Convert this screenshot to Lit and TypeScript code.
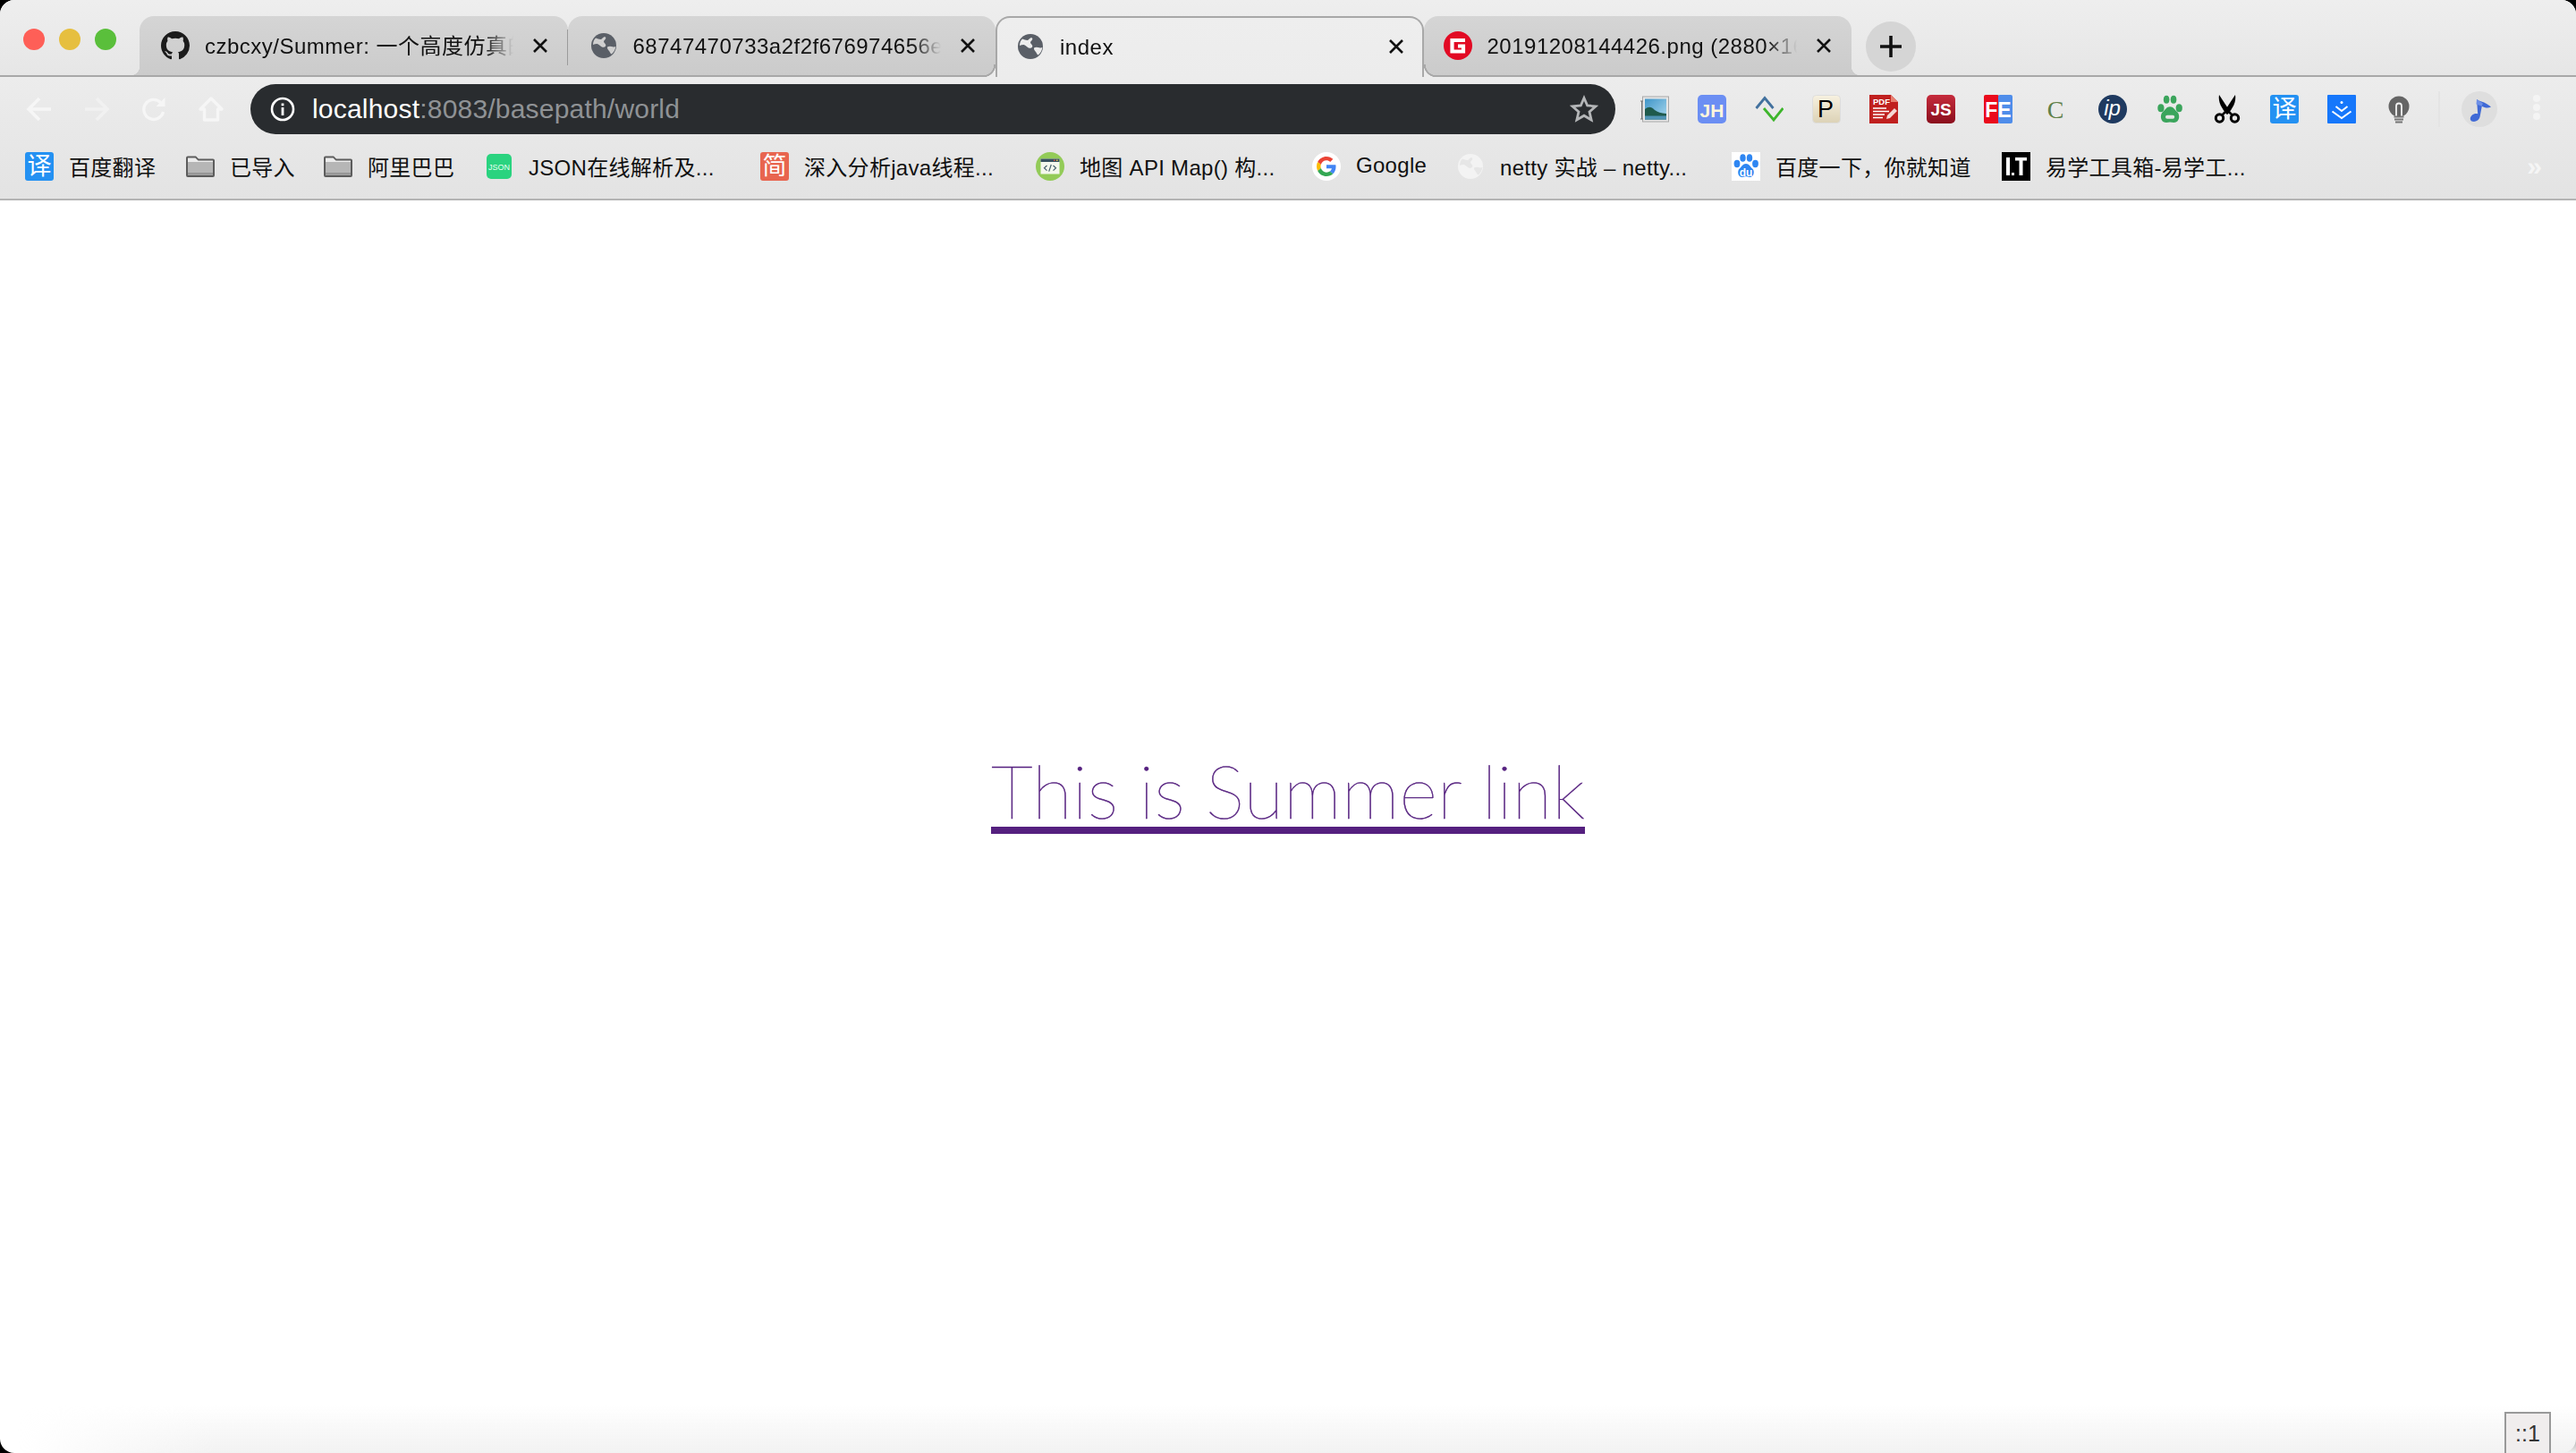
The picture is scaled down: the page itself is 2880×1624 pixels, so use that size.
import { LitElement, css, html, svg } from 'lit';
import { customElement } from 'lit/decorators.js';

const octocat = svg`<svg viewBox="0 0 16 16" class="ic"><path fill="#1b1b1b" d="M8 0C3.58 0 0 3.58 0 8c0 3.54 2.29 6.53 5.47 7.59.4.07.55-.17.55-.38 0-.19-.01-.82-.01-1.49-2.01.37-2.53-.49-2.69-.94-.09-.23-.48-.94-.82-1.13-.28-.15-.68-.52-.01-.53.63-.01 1.08.58 1.23.82.72 1.21 1.87.87 2.33.66.07-.52.28-.87.51-1.07-1.78-.2-3.64-.89-3.64-3.95 0-.87.31-1.59.82-2.15-.08-.2-.36-1.02.08-2.12 0 0 .67-.21 2.2.82.64-.18 1.32-.27 2-.27.68 0 1.36.09 2 .27 1.53-1.04 2.2-.82 2.2-.82.44 1.1.16 1.92.08 2.12.51.56.82 1.27.82 2.15 0 3.07-1.87 3.75-3.65 3.95.29.25.54.73.54 1.48 0 1.07-.01 1.93-.01 2.2 0 .21.15.46.55.38A8.013 8.013 0 0016 8c0-4.42-3.58-8-8-8z"/></svg>`;

const globe = (fg: string, bg: string) => svg`<svg viewBox="0 0 32 32" class="ic">
  <circle cx="16" cy="16" r="14" fill=${fg}/>
  <path fill=${bg} d="M7 7.500c2 .4 4 1.600 5.500 1.500 1.400-.2 2-1.800 3.500-2.600 1.500-.6 2.500.1 2.300 1.300-.3 1.500-2.300 2.300-2.300 3.800 0 1.700 2.500 2.300 2.300 4.300-.2 1.800-2.500 2.400-3.800 1.900-2-.8-3.300-3-5.300-3.500-1.800-.4-3.500.5-5.200.8C4 12 5 9 7 7.500z"/>
  <path fill=${bg} d="M20 17.500c1.800-1 4-.8 6-.2 1.200.4 2.500.2 3.300-.2-.3 3.500-2 6.500-4.600 8.500-1.300-.6-1.500-2-2.300-3.200-.8-1.300-3-2.800-2.400-4.900z"/>
</svg>`;

const close = svg`<svg viewBox="0 0 18 18" class="close"><path d="M2 2l14 14M16 2L2 16" stroke="#111" stroke-width="2.600" fill="none"/></svg>`;

const folder = svg`<svg viewBox="0 0 32 32" class="ic">
  <path fill="#5c5c5c" d="M0 6.500A2 2 0 0 1 2 4.500h9l3 3h16a2 2 0 0 1 2 2V26a2 2 0 0 1-2 2H2a2 2 0 0 1-2-2z"/>
  <path fill="#ececec" d="M2 6.500h8.500l3 3H30v1.500H2z"/>
  <rect x="2" y="11" width="28" height="12.500" fill="#b6b6b6"/>
  <rect x="2" y="23.500" width="28" height="2.500" fill="#9c9c9c"/>
</svg>`;

const tile = (bg: string, label: string, cls = 'tile-zh', rx = 3) => svg`<svg viewBox="0 0 32 32" class="ic">
  <rect width="32" height="32" rx=${rx} fill=${bg}/>
  <text x="16" y="25" text-anchor="middle" class=${cls}>${label}</text>
</svg>`;

const jsonIcon = svg`<svg viewBox="0 0 32 32" class="ic">
  <rect x="2" y="2" width="28" height="28" rx="5" fill="#2ad37f"/>
  <text x="16" y="20" text-anchor="middle" class="tile-json">JSON</text>
</svg>`;

const mapIcon = svg`<svg viewBox="0 0 32 32" class="ic">
  <circle cx="16" cy="16" r="16" fill="#93cb58"/>
  <rect x="5.500" y="7.500" width="21" height="17" fill="#f4f7ee"/>
  <rect x="5.500" y="7.500" width="21" height="3.500" fill="#37505f"/>
  <rect x="20" y="8.500" width="1.500" height="1.500" fill="#e0574a"/>
  <rect x="23" y="8.500" width="1.500" height="1.500" fill="#e7c34a"/>
  <path d="M12.500 15l-3 2.800 3 2.800M19.500 15l3 2.800-3 2.800M17.300 14l-2.600 7.600" stroke="#47606e" stroke-width="1.200" fill="none"/>
</svg>`;

const googleIcon = svg`<svg viewBox="0 0 32 32" class="ic">
  <circle cx="16" cy="16" r="16" fill="#fff"/>
  <g transform="translate(5 5) scale(.458)">
    <path fill="#EA4335" d="M24 9.500c3.540 0 6.710 1.220 9.210 3.600l6.850-6.850C35.900 2.380 30.470 0 24 0 14.620 0 6.510 5.380 2.560 13.220l7.980 6.190C12.430 13.720 17.740 9.500 24 9.500z"/>
    <path fill="#4285F4" d="M46.980 24.550c0-1.570-.15-3.090-.38-4.550H24v9.020h12.940c-.58 2.960-2.260 5.480-4.780 7.180l7.730 6c4.510-4.180 7.090-10.360 7.090-17.650z"/>
    <path fill="#FBBC05" d="M10.530 28.590c-.48-1.450-.76-2.990-.76-4.590s.27-3.140.76-4.590l-7.980-6.190C.92 16.460 0 20.120 0 24c0 3.880.92 7.540 2.560 10.780l7.970-6.190z"/>
    <path fill="#34A853" d="M24 48c6.480 0 11.930-2.130 15.890-5.810l-7.730-6c-2.150 1.450-4.920 2.300-8.160 2.300-6.260 0-11.570-4.220-13.470-9.910l-7.980 6.190C6.510 42.620 14.620 48 24 48z"/>
  </g>
</svg>`;

const baiduIcon = svg`<svg viewBox="0 0 32 32" class="ic">
  <rect width="32" height="32" fill="#fff"/>
  <g fill="#2e86f2">
    <ellipse cx="6" cy="13" rx="3.400" ry="4.200"/>
    <ellipse cx="12.500" cy="6.500" rx="3.200" ry="4.300"/>
    <ellipse cx="20" cy="6.500" rx="3.200" ry="4.300"/>
    <ellipse cx="26.500" cy="13" rx="3.400" ry="4.200"/>
    <path d="M16 13c3.500 0 5 3.500 7.500 5.800 2.400 2.300 1.500 9.700-3.500 9.200-1.500-.2-2.800-.8-4-.8s-2.500.6-4 .8c-5 .5-5.900-6.900-3.500-9.200C11 16.500 12.500 13 16 13z"/>
  </g>
  <text x="16" y="27" text-anchor="middle" class="tile-du">du</text>
</svg>`;

const itIcon = svg`<svg viewBox="0 0 32 32" class="ic">
  <rect width="32" height="32" fill="#000"/>
  <rect x="5" y="6" width="4" height="20" fill="#fff"/>
  <rect x="11" y="23" width="3" height="3" fill="#fff"/>
  <rect x="15" y="6" width="13" height="3.500" fill="#fff"/>
  <rect x="19.500" y="6" width="4" height="20" fill="#fff"/>
</svg>`;

const redG = svg`<svg viewBox="0 0 32 32" class="ic">
  <circle cx="16" cy="16" r="16" fill="#e20a24"/>
  <path d="M24 10H9.500v12.500H22V16.500h-6" fill="none" stroke="#fff" stroke-width="4.200"/>
</svg>`;

const imageExt = svg`<svg viewBox="0 0 32 32" class="ic">
  <defs><linearGradient id="sky" x1="0" y1="0" x2="1" y2="1"><stop offset="0" stop-color="#3f95c8"/><stop offset="1" stop-color="#a9d8ee"/></linearGradient></defs>
  <rect x="2.500" y="2" width="29" height="28" fill="#e6e6e6" stroke="#a8a8a8"/>
  <rect x="5" y="4.500" width="24" height="23" fill="url(#sky)"/>
  <path d="M5 16c4-3 7-3 11 1 3 2.500 7 3.500 13 4v6.500H5z" fill="#1f5a4c"/>
  <path d="M5 23.500h24v4H5z" fill="#4f93b4"/>
  <path d="M0 7h3M0 27h3M1.500 7v20" stroke="#777" stroke-width="1"/>
</svg>`;

const chevrons = svg`<svg viewBox="0 0 32 32" class="ic">
  <path d="M1.500 15L11 3.500 20.500 15" fill="none" stroke="#42719e" stroke-width="2.800"/>
  <path d="M10 15l11 13 10.500-13" fill="none" stroke="#3db52b" stroke-width="2.800"/>
</svg>`;

const pTile = svg`<svg viewBox="0 0 32 32" class="ic">
  <defs><linearGradient id="cream" x1="0" y1="0" x2="0" y2="1"><stop offset="0" stop-color="#f7f1e0"/><stop offset="1" stop-color="#dcd2b6"/></linearGradient></defs>
  <rect x=".5" y=".5" width="31" height="31" rx="4" fill="url(#cream)" stroke="#ddd"/>
  <text x="15" y="25" text-anchor="middle" class="tile-p">P</text>
</svg>`;

const pdfIcon = svg`<svg viewBox="0 0 32 32" class="ic">
  <path d="M0 0h24l8 8v24H0z" fill="#c0201f"/>
  <path d="M24 0l8 8h-8z" fill="#e77f70"/>
  <text x="4" y="11" class="tile-pdf">PDF</text>
  <path d="M4 15h15M4 18.500h18M4 22h13M4 25.500h11" stroke="#fff" stroke-width="1.700"/>
  <path d="M19 27l1-4 8-8 3 3-8 8z" fill="#f4d8d4"/>
</svg>`;

const jsTile = svg`<svg viewBox="0 0 32 32" class="ic">
  <defs><linearGradient id="wine" x1="0" y1="0" x2="0" y2="1"><stop offset="0" stop-color="#c62b3c"/><stop offset="1" stop-color="#8a0f1d"/></linearGradient></defs>
  <rect width="32" height="32" rx="5" fill="url(#wine)"/>
  <text x="16" y="23" text-anchor="middle" class="tile-js">JS</text>
</svg>`;

const feTile = svg`<svg viewBox="0 0 32 32" class="ic">
  <rect width="17" height="32" rx="2" fill="#ea0b1c"/>
  <rect x="16" width="16" height="32" rx="2" fill="#4f8dea"/>
  <text x="16" y="25" text-anchor="middle" class="tile-fe">FE</text>
</svg>`;

const cLetter = svg`<svg viewBox="0 0 32 32" class="ic"><text x="16" y="26" text-anchor="middle" class="tile-c">C</text></svg>`;

const ipIcon = svg`<svg viewBox="0 0 32 32" class="ic">
  <circle cx="16" cy="16" r="16" fill="#1f3a60"/>
  <text x="15.500" y="23" text-anchor="middle" class="tile-ip">ip</text>
</svg>`;

const pawIcon = svg`<svg viewBox="0 0 32 32" class="ic">
  <g fill="#3ba55c" transform="translate(-2 -1) scale(1.130)">
    <ellipse cx="7" cy="14" rx="3.200" ry="4"/>
    <ellipse cx="12.500" cy="5.500" rx="2.900" ry="4"/>
    <ellipse cx="19.500" cy="5.500" rx="2.900" ry="4"/>
    <ellipse cx="25" cy="14" rx="3.200" ry="4"/>
    <path d="M16 12.500c3.400 0 5 3.300 7.300 5.500 2.700 2.600 2.600 10-3.300 10.400-1.500.1-2.800-.5-4-.5s-2.500.6-4 .5C6.100 28 6 20.600 8.700 18c2.300-2.200 3.900-5.500 7.300-5.500z"/>
    <rect x="11.500" y="21" width="9" height="3.500" rx="1.700" fill="#e6e6e6"/>
  </g>
</svg>`;

const scissors = svg`<svg viewBox="0 0 32 32" class="ic">
  <path d="M7 0l11.500 17.500-3 4.500C10 15 5.500 8 7 0z" fill="#000"/>
  <path d="M25 0L13.500 17.500l3 4.500C22 15 26.500 8 25 0z" fill="#000"/>
  <path d="M10 23l5-5M22 23l-5-5" stroke="#000" stroke-width="2.500"/>
  <circle cx="7.500" cy="26" r="4.200" fill="none" stroke="#000" stroke-width="3"/>
  <circle cx="24.500" cy="26" r="4.200" fill="none" stroke="#000" stroke-width="3"/>
</svg>`;

const dlIcon = svg`<svg viewBox="0 0 32 32" class="ic">
  <rect width="32" height="32" rx="1" fill="#1677fb"/>
  <circle cx="16" cy="8.500" r="1.500" fill="#fff"/>
  <path d="M9.500 13l6.500 5 6.500-5M5.500 18.500l10.500 7.500 10.500-7.500" fill="none" stroke="#fff" stroke-width="2"/>
</svg>`;

const bulb = svg`<svg viewBox="0 0 32 32" class="ic">
  <circle cx="16" cy="13" r="11.500" fill="#656565"/>
  <path d="M13 24V12.500a3 3 0 0 1 6 0V24" fill="#656565" stroke="#f2f2f2" stroke-width="1.800"/>
  <path d="M10.500 24.500h11M11 27.500h10M12 30.500h8" stroke="#757575" stroke-width="2"/>
</svg>`;

const note = svg`<svg viewBox="0 0 40 40" class="note">
  <path d="M17 9c3 2.500 7.500 2.500 11 5 2 1.300 3.500 2.500 5 3.500-3.500 1.800-7 1-10.200-.8l-2.300 12c-.8 3.300-4.500 5.800-8 5.100-3.300-.7-3.500-4.500-1-6.800 2-1.800 4.500-2.300 6.700-1.700z" fill="#3f69d6"/>
  <path d="M17 9l-.5 5.500 6.300 2.200 1-3.200z" fill="#6d8fe6"/>
</svg>`;

const tabs = [
  { icon: octocat, title: 'czbcxy/Summer: 一个高度仿真的Tomcat服务器', active: false, sep: true },
  { icon: globe('#5a5f67', '#cfcfcf'), title: '68747470733a2f2f676974656e6565', active: false, sep: false },
  { icon: globe('#5a5f67', '#ececec'), title: 'index', active: true, sep: false },
  { icon: redG, title: '20191208144426.png (2880×1624)', active: false, sep: false },
];

const extensions = [
  imageExt,
  tile('#6b8ef3', 'JH', 'tile-jh', 5),
  chevrons,
  pTile,
  pdfIcon,
  jsTile,
  feTile,
  cLetter,
  ipIcon,
  pawIcon,
  scissors,
  tile('#2491f2', '译'),
  dlIcon,
  bulb,
];

const bookmarks = [
  { icon: tile('#2491f2', '译'), label: '百度翻译', width: 180 },
  { icon: folder, label: '已导入', width: 154 },
  { icon: folder, label: '阿里巴巴', width: 180 },
  { icon: jsonIcon, label: 'JSON在线解析及...', width: 308 },
  { icon: tile('#e8654f', '简'), label: '深入分析java线程...', width: 308 },
  { icon: mapIcon, label: '地图 API Map() 构...', width: 309 },
  { icon: googleIcon, label: 'Google', width: 161 },
  { icon: globe('#f3f3f3', '#e6e6e6'), label: 'netty 实战 – netty...', width: 308 },
  { icon: baiduIcon, label: '百度一下，你就知道', width: 302 },
  { icon: itIcon, label: '易学工具箱-易学工...', width: 300 },
];

@customElement('app-root')
export class AppRoot extends LitElement {
  static styles = css`
    :host {
      display: block;
      position: relative;
      height: 1624px;
      overflow: hidden;
      background: #000;
      font-family: 'Liberation Sans', 'Noto Sans CJK SC', sans-serif;
      font-size: 24px;
      color: #111;
    }
    .window {
      display: flex;
      flex-direction: column;
      height: 100%;
      border-radius: 16px;
      overflow: hidden;
      background: #fff;
    }

    .strip {
      display: flex;
      align-items: flex-end;
      box-sizing: border-box;
      height: 86px;
      padding-left: 156px;
      background: linear-gradient(#eeeeee, #e6e6e6);
      border-bottom: 2px solid #a8a8a8;
    }
    .lights {
      position: absolute;
      top: 32px;
      left: 26px;
      display: flex;
      gap: 16px;
    }
    .light { width: 24px; height: 24px; border-radius: 50%; }
    .red { background: #fe5f57; }
    .yellow { background: #e6bf3f; }
    .green { background: #5abf3b; }

    .tab {
      position: relative;
      display: flex;
      align-items: center;
      flex: none;
      box-sizing: border-box;
      width: 478.500px;
      height: 66px;
      padding: 2px 22px 2px 24px;
      border-radius: 16px 16px 0 0;
      background: linear-gradient(#d5d5d5, #cbcbcb);
    }
    .tab:nth-child(4) { padding-left: 22px; }
    .tab:first-child::before,
    .tab:nth-child(4)::after {
      content: '';
      position: absolute;
      bottom: 0;
      width: 10px;
      height: 10px;
    }
    .tab:first-child::before {
      left: -10px;
      background: radial-gradient(circle at 0 0, transparent 10px, #cbcbcb 10.500px);
    }
    .tab:nth-child(4)::after {
      right: -10px;
      background: radial-gradient(circle at 100% 0, transparent 10px, #cbcbcb 10.500px);
    }
    .tab.active {
      z-index: 1;
      height: 68px;
      margin-bottom: -2px;
      padding: 2px 20px 4px 21px;
      border: 2px solid #a8a8a8;
      border-bottom: none;
      background: linear-gradient(#eeeeee, #ececec);
    }
    .tab.active::before,
    .tab.active::after {
      content: '';
      position: absolute;
      bottom: 0;
      width: 14px;
      height: 14px;
    }
    .tab.active::before {
      left: -16px;
      background: radial-gradient(circle at 0 0, transparent 12px, #a8a8a8 12.500px, #a8a8a8 14px, #ececec 14.500px);
    }
    .tab.active::after {
      right: -16px;
      background: radial-gradient(circle at 100% 0, transparent 12px, #a8a8a8 12.500px, #a8a8a8 14px, #ececec 14.500px);
    }
    .sep {
      position: absolute;
      right: -1px;
      top: 15px;
      width: 2px;
      height: 40px;
      background: #9b9b9b;
    }
    .ic { flex: none; width: 32px; height: 32px; }
    .title {
      flex: 1;
      min-width: 0;
      margin-left: 17px;
      padding-top: 1px;
      line-height: 32px;
      letter-spacing: 0.5px;
      white-space: nowrap;
      overflow: hidden;
      -webkit-mask-image: linear-gradient(to right, #000 calc(100% - 32px), transparent);
      mask-image: linear-gradient(to right, #000 calc(100% - 32px), transparent);
    }
    .close { flex: none; width: 18px; height: 18px; margin-left: 21px; }
    .newtab {
      display: flex;
      align-items: center;
      justify-content: center;
      width: 56px;
      height: 56px;
      margin: 0 0 4px 16px;
      border-radius: 50%;
      background: #d5d5d5;
    }
    .newtab svg { width: 28px; height: 28px; }

    .toolbar { background: linear-gradient(#ececec, #e3e3e3); border-bottom: 2px solid #b4b4b4; }
    .navrow { display: flex; align-items: center; padding: 8px 0 0 12px; }
    .navbtn { display: flex; justify-content: center; width: 64px; }
    .navbtn svg { width: 30px; height: 30px; }
    .omnibox {
      display: flex;
      align-items: center;
      box-sizing: border-box;
      width: 1526px;
      height: 56px;
      margin-left: 12px;
      padding: 0 19px 0 22px;
      border-radius: 28px;
      background: #292c2f;
    }
    .omnibox .info { width: 28px; height: 28px; flex: none; }
    .url { flex: 1; margin-left: 19px; font-size: 30px; letter-spacing: 0.2px; color: #8f9295; white-space: nowrap; }
    .url b { font-weight: 400; color: #fff; }
    .star { flex: none; width: 32px; height: 32px; }
    .exts { display: flex; align-items: center; gap: 32px; margin-left: 28px; }
    .divider { width: 2px; height: 40px; margin-left: 28px; background: #e4e4e4; }
    .avatar {
      display: flex;
      align-items: center;
      justify-content: center;
      width: 40px;
      height: 40px;
      margin-left: 24px;
      border-radius: 50%;
      background: #dedede;
    }
    .note { width: 40px; height: 40px; }
    .dots { width: 8px; height: 32px; margin-left: 40px; }

    .bookmarks { display: flex; align-items: center; height: 70px; padding: 1px 0 1px 28px; }
    .bookmark { display: flex; align-items: center; flex: none; }
    .bookmark span { margin: 0 0 2px 17px; letter-spacing: 0.3px; white-space: nowrap; }
    .more { margin-left: auto; margin-right: 38px; color: #f5f5f5; font-size: 30px; font-weight: 700; }

    text { font-family: 'Liberation Sans', 'Noto Sans CJK SC', sans-serif; }
    .tile-zh { font-size: 27px; fill: #fff; }
    .tile-json { font-size: 9px; fill: #e8fff3; }
    .tile-du { font-size: 12px; font-weight: 700; fill: #fff; }
    .tile-jh { font-size: 21px; font-weight: 700; fill: #fff6dc; }
    .tile-p { font-size: 27px; fill: #000; }
    .tile-pdf { font-size: 9.500px; font-weight: 700; fill: #fff; }
    .tile-js { font-size: 19px; font-weight: 700; fill: #fff; }
    .tile-fe { font-size: 23px; font-weight: 700; fill: #fff; }
    .tile-c { font-family: 'Liberation Serif', serif; font-size: 28px; fill: #5f8048; }
    .tile-ip { font-size: 24px; font-style: italic; fill: #fff; }

    .page {
      flex: 1;
      display: flex;
      align-items: center;
      justify-content: center;
      padding-bottom: 74px;
    }
    .link {
      font-family: Lato, sans-serif;
      font-weight: 100;
      font-size: 82px;
      line-height: 1;
      color: #55207f;
      -webkit-text-stroke: 0.5px #55207f;
      text-decoration: none;
      border-bottom: 8px solid #55207f;
    }
    .fade {
      position: absolute;
      left: 0;
      right: 0;
      bottom: 0;
      height: 54px;
      background: linear-gradient(to top, #f2f2f2, #fff0);
      -webkit-mask-image: linear-gradient(to right, transparent 20px, #000 240px);
      mask-image: linear-gradient(to right, transparent 20px, #000 240px);
    }
    .badge {
      position: absolute;
      right: 28px;
      bottom: -4px;
      box-sizing: border-box;
      width: 52px;
      height: 50px;
      padding-top: 8px;
      border: 2px solid #999;
      background: #f0eded;
      color: #333;
      font-size: 25px;
      text-align: center;
    }
  `;

  render() {
    return html`
      <div class="window">
        <div class="strip">
          ${tabs.map(
            (t) => html`
              <div class="tab ${t.active ? 'active' : ''}">
                ${t.icon}
                <div class="title">${t.title}</div>
                ${close}
                ${t.sep ? html`<div class="sep"></div>` : ''}
              </div>
            `
          )}
          <div class="newtab">
            <svg viewBox="0 0 28 28"><path d="M14 2v24M2 14h24" stroke="#111" stroke-width="3.600"/></svg>
          </div>
        </div>
        <div class="lights">
          <div class="light red"></div>
          <div class="light yellow"></div>
          <div class="light green"></div>
        </div>

        <div class="toolbar">
          <div class="navrow">
            <div class="navbtn">
              <svg viewBox="0 0 30 30"><path d="M28 15H4M15 3L3 15l12 12" fill="none" stroke="#f6f6f6" stroke-width="3.600"/></svg>
            </div>
            <div class="navbtn">
              <svg viewBox="0 0 30 30"><path d="M2 15h24M15 3l12 12-12 12" fill="none" stroke="#f1f1f1" stroke-width="3.600"/></svg>
            </div>
            <div class="navbtn">
              <svg viewBox="0 0 30 30"><path d="M25.500 18a11 11 0 1 1-3-10.500" fill="none" stroke="#f6f6f6" stroke-width="3.400"/><path d="M27.500 2v10h-10z" fill="#f6f6f6"/></svg>
            </div>
            <div class="navbtn">
              <svg viewBox="0 0 30 30"><path d="M15 3L3 15h4.500v12h15V15H27z" fill="none" stroke="#f6f6f6" stroke-width="3.400" stroke-linejoin="round"/></svg>
            </div>
            <div class="omnibox">
              <svg class="info" viewBox="0 0 28 28">
                <circle cx="14" cy="14" r="12" fill="none" stroke="#fff" stroke-width="2.600"/>
                <rect x="12.600" y="12" width="2.800" height="9" fill="#fff"/>
                <rect x="12.600" y="7.500" width="2.800" height="2.800" fill="#fff"/>
              </svg>
              <div class="url"><b>localhost</b>:8083/basepath/world</div>
              <svg class="star" viewBox="0 0 32 32">
                <path d="M16 3.500l3.700 8.500 9.300.8-7 6.100 2.100 9.100-8.100-4.800-8.100 4.800 2.100-9.100-7-6.100 9.300-.8z" fill="none" stroke="#b4b6b8" stroke-width="2.800"/>
              </svg>
            </div>
            <div class="exts">${extensions}</div>
            <div class="divider"></div>
            <div class="avatar">${note}</div>
            <svg class="dots" viewBox="0 0 8 32">
              <circle cx="4" cy="4" r="4" fill="#f4f4f4"/>
              <circle cx="4" cy="14" r="4" fill="#f4f4f4"/>
              <circle cx="4" cy="24" r="4" fill="#f4f4f4"/>
            </svg>
          </div>
          <div class="bookmarks">
            ${bookmarks.map(
              (b) => html`
                <div class="bookmark" style="width:${b.width}px">
                  ${b.icon}
                  <span>${b.label}</span>
                </div>
              `
            )}
            <div class="more">»</div>
          </div>
        </div>

        <div class="page">
          <a class="link" href="#">This is Summer link</a>
        </div>
      </div>
      <div class="fade"></div>
      <div class="badge">::1</div>
    `;
  }
}
